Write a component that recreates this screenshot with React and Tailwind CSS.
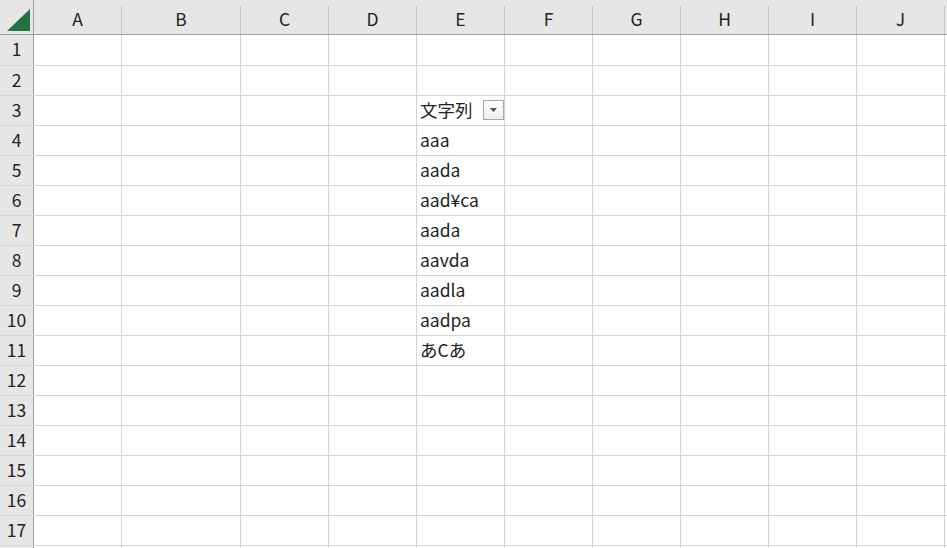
const cols = [
  { name: "A", w: "w-[88px]" },
  { name: "B", w: "w-[119px]" },
  { name: "C", w: "w-[88px]" },
  { name: "D", w: "w-[88px]" },
  { name: "E", w: "w-[88px]" },
  { name: "F", w: "w-[88px]" },
  { name: "G", w: "w-[88px]" },
  { name: "H", w: "w-[88px]" },
  { name: "I", w: "w-[88px]" },
  { name: "J", w: "w-[88px]" },
];

const values = {
  3: "文字列",
  4: "aaa",
  5: "aada",
  6: "aad¥ca",
  7: "aada",
  8: "aavda",
  9: "aadla",
  10: "aadpa",
  11: "あCあ",
};

const rows = Array.from({ length: 18 }, (_, i) => i + 1);

const FilterButton = () => (
  <span className="ml-auto flex h-[20px] w-[21px] items-center justify-center border border-[#a6a6a6] bg-gradient-to-b from-white to-[#eeeeee]">
    <svg width="7" height="4" viewBox="0 0 7 4">
      <path d="M0 0h7L3.5 4z" fill="#555" />
    </svg>
  </span>
);

const App = () => {
  return (
    <div
      className="h-[548px] w-[947px] overflow-hidden bg-white text-[17.5px] text-[#222]"
      style={{ fontFamily: '"Noto Sans CJK JP", "Noto Sans", sans-serif' }}
    >
      {/* column header */}
      <div className="flex h-[35px] border-b border-[#9e9e9e] bg-[#e6e6e6]">
        <div className="flex w-[34px] shrink-0 items-end justify-end border-r border-[#9e9e9e] pb-[3px] pr-[3px]">
          <svg width="23" height="22" viewBox="0 0 23 22">
            <path d="M23 0V22H0z" fill="#217346" />
          </svg>
        </div>
        {cols.map((c) => (
          <div key={c.name} className={`${c.w} flex shrink-0 flex-col`}>
            <div className="h-[6px]" />
            <div className="flex flex-1 items-center justify-center border-r border-[#c6c6c6] pb-[2px] leading-none">
              {c.name}
            </div>
          </div>
        ))}
      </div>

      {rows.map((r) => (
        <div
          key={r}
          className={`flex ${r === 1 ? "h-[31px]" : "h-[30px]"} border-b border-[#d4d4d4]`}
        >
          <div className="flex w-[34px] shrink-0 items-center justify-center border-r border-[#9e9e9e] bg-[#e6e6e6] pb-[2px] leading-none">
            {r < 18 ? r : ""}
          </div>
          {cols.map((c) => (
            <div
              key={c.name}
              className={`${c.w} flex shrink-0 items-center border-r border-[#d4d4d4] pb-[1px] pl-[3px] leading-none`}
            >
              {c.name === "E" && values[r] ? (
                <>
                  <span className="pb-[1px]">{values[r]}</span>
                  {r === 3 && <FilterButton />}
                </>
              ) : null}
            </div>
          ))}
        </div>
      ))}
    </div>
  );
};

export default App;
